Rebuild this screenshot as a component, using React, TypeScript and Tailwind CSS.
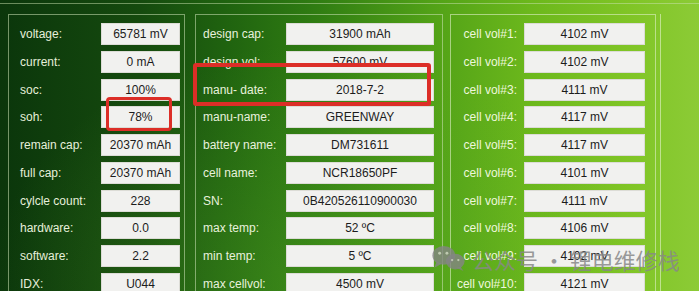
const basicInfo = [
  ["voltage:", "65781 mV"],
  ["current:", "0 mA"],
  ["soc:", "100%"],
  ["soh:", "78%"],
  ["remain cap:", "20370 mAh"],
  ["full cap:", "20370 mAh"],
  ["cylcle count:", "228"],
  ["hardware:", "0.0"],
  ["software:", "2.2"],
  ["IDX:", "U044"],
];

const packInfo = [
  ["design cap:", "31900 mAh"],
  ["design vol:", "57600 mV"],
  ["manu- date:", "2018-7-2"],
  ["manu-name:", "GREENWAY"],
  ["battery name:", "DM731611"],
  ["cell name:", "NCR18650PF"],
  ["SN:", "0B420526110900030"],
  ["max temp:", "52 ºC"],
  ["min temp:", "5 ºC"],
  ["max cellvol:", "4500 mV"],
];

const cellVols = ["4102", "4102", "4111", "4117", "4117", "4101", "4111", "4106", "4102", "4121"];

function ValueBox({ value, width }: { value: string; width: string }) {
  return (
    <div
      className={`${width} h-[22px] shrink-0 flex items-center justify-center bg-[#f1f1ef] border border-[#dcdcd6] text-[12px] text-[#1c1c1c]`}
    >
      {value}
    </div>
  );
}

function WeChatIcon() {
  return (
    <svg width="36" height="27" viewBox="0 0 34 26">
      <g fill="#858585" fillOpacity="0.8">
        <ellipse cx="12" cy="10" rx="11" ry="9" />
        <path d="M5 16 L3 22 L10 18 Z" />
        <ellipse cx="23" cy="16" rx="9" ry="7.5" />
        <path d="M28 21 L31 25 L24 22 Z" />
      </g>
      <g fill="#cfd8c0" fillOpacity="0.8">
        <circle cx="8" cy="8" r="1.4" />
        <circle cx="15" cy="8" r="1.4" />
        <circle cx="20" cy="14.5" r="1.1" />
        <circle cx="26" cy="14.5" r="1.1" />
      </g>
    </svg>
  );
}

export default function App() {
  return (
    <div
      className="relative w-[699px] h-[291px] overflow-hidden bg-[linear-gradient(90deg,#0b360b_0%,#154a0e_20%,#1f620f_32%,#2f7c12_45%,#52a217_62%,#6cb81c_76%,#80c526_90%,#8ccb36_100%)]"
      style={{ fontFamily: '"Liberation Sans", Arial, sans-serif' }}
    >
      {/* soft highlight toward the lower middle */}
      <div className="absolute inset-0 bg-[radial-gradient(ellipse_at_45%_100%,rgba(90,170,40,0.35),transparent_60%)]" />

      <div className="relative flex flex-col">
        <div className="mt-[3px] h-px bg-[#c9e2b0]/50" />

        <div className="flex items-start mt-[10px]">
          {/* basic info */}
          <div className="ml-[8px] w-[177px] h-[300px] border-l border-t border-r border-[#cde3b8]/55 pt-[8px] flex flex-col gap-[5.75px]">
            {basicInfo.map(([label, value]) => (
              <div key={label} className="flex items-center">
                <div className="pl-[11px] w-[92px] text-[12px] text-[#e6efda]">{label}</div>
                <ValueBox value={value} width="w-[79px]" />
              </div>
            ))}
          </div>

          {/* pack info */}
          <div className="ml-[10px] w-[248px] h-[300px] border-l border-t border-r border-[#cde3b8]/55 pt-[8px] flex flex-col gap-[5.75px]">
            {packInfo.map(([label, value]) => (
              <div key={label} className="flex items-center">
                <div className="pl-[7px] w-[90px] text-[12px] text-[#e8f1dc]">{label}</div>
                <ValueBox value={value} width="w-[148px]" />
              </div>
            ))}
          </div>

          {/* cell voltages */}
          <div className="ml-[7px] w-[206px] h-[300px] border-l border-t border-r border-[#e0f0c8]/60 pt-[8px] flex flex-col gap-[5.75px]">
            {cellVols.map((v, i) => (
              <div key={i} className="flex items-center">
                <div className="w-[66px] text-right text-[12px] text-[#eef7dc]">cell vol#{i + 1}:</div>
                <div className="ml-[7px]">
                  <ValueBox value={`${v} mV`} width="w-[121px]" />
                </div>
              </div>
            ))}
          </div>
          <div className="ml-[4px] w-px h-[300px] bg-[#e6f3cf]/60" />
        </div>
      </div>

      {/* red annotations */}
      <div className="absolute left-[106px] top-[97px] w-[66px] h-[34px] border-[3px] border-[#dc2e27] rounded-[4px]" />
      <div className="absolute left-[193px] top-[63px] w-[238px] h-[43px] border-[4px] border-[#dc2e27] rounded-[3px]" />

      {/* watermark */}
      <div className="absolute left-[431px] top-[245px] flex items-center">
        <WeChatIcon />
        <span
          className="ml-[5px] text-[22px] leading-none text-[#888888]/85"
          style={{ fontFamily: '"Noto Sans CJK SC", sans-serif' }}
        >
          公众号 · 锂电维修栈
        </span>
      </div>
    </div>
  );
}
